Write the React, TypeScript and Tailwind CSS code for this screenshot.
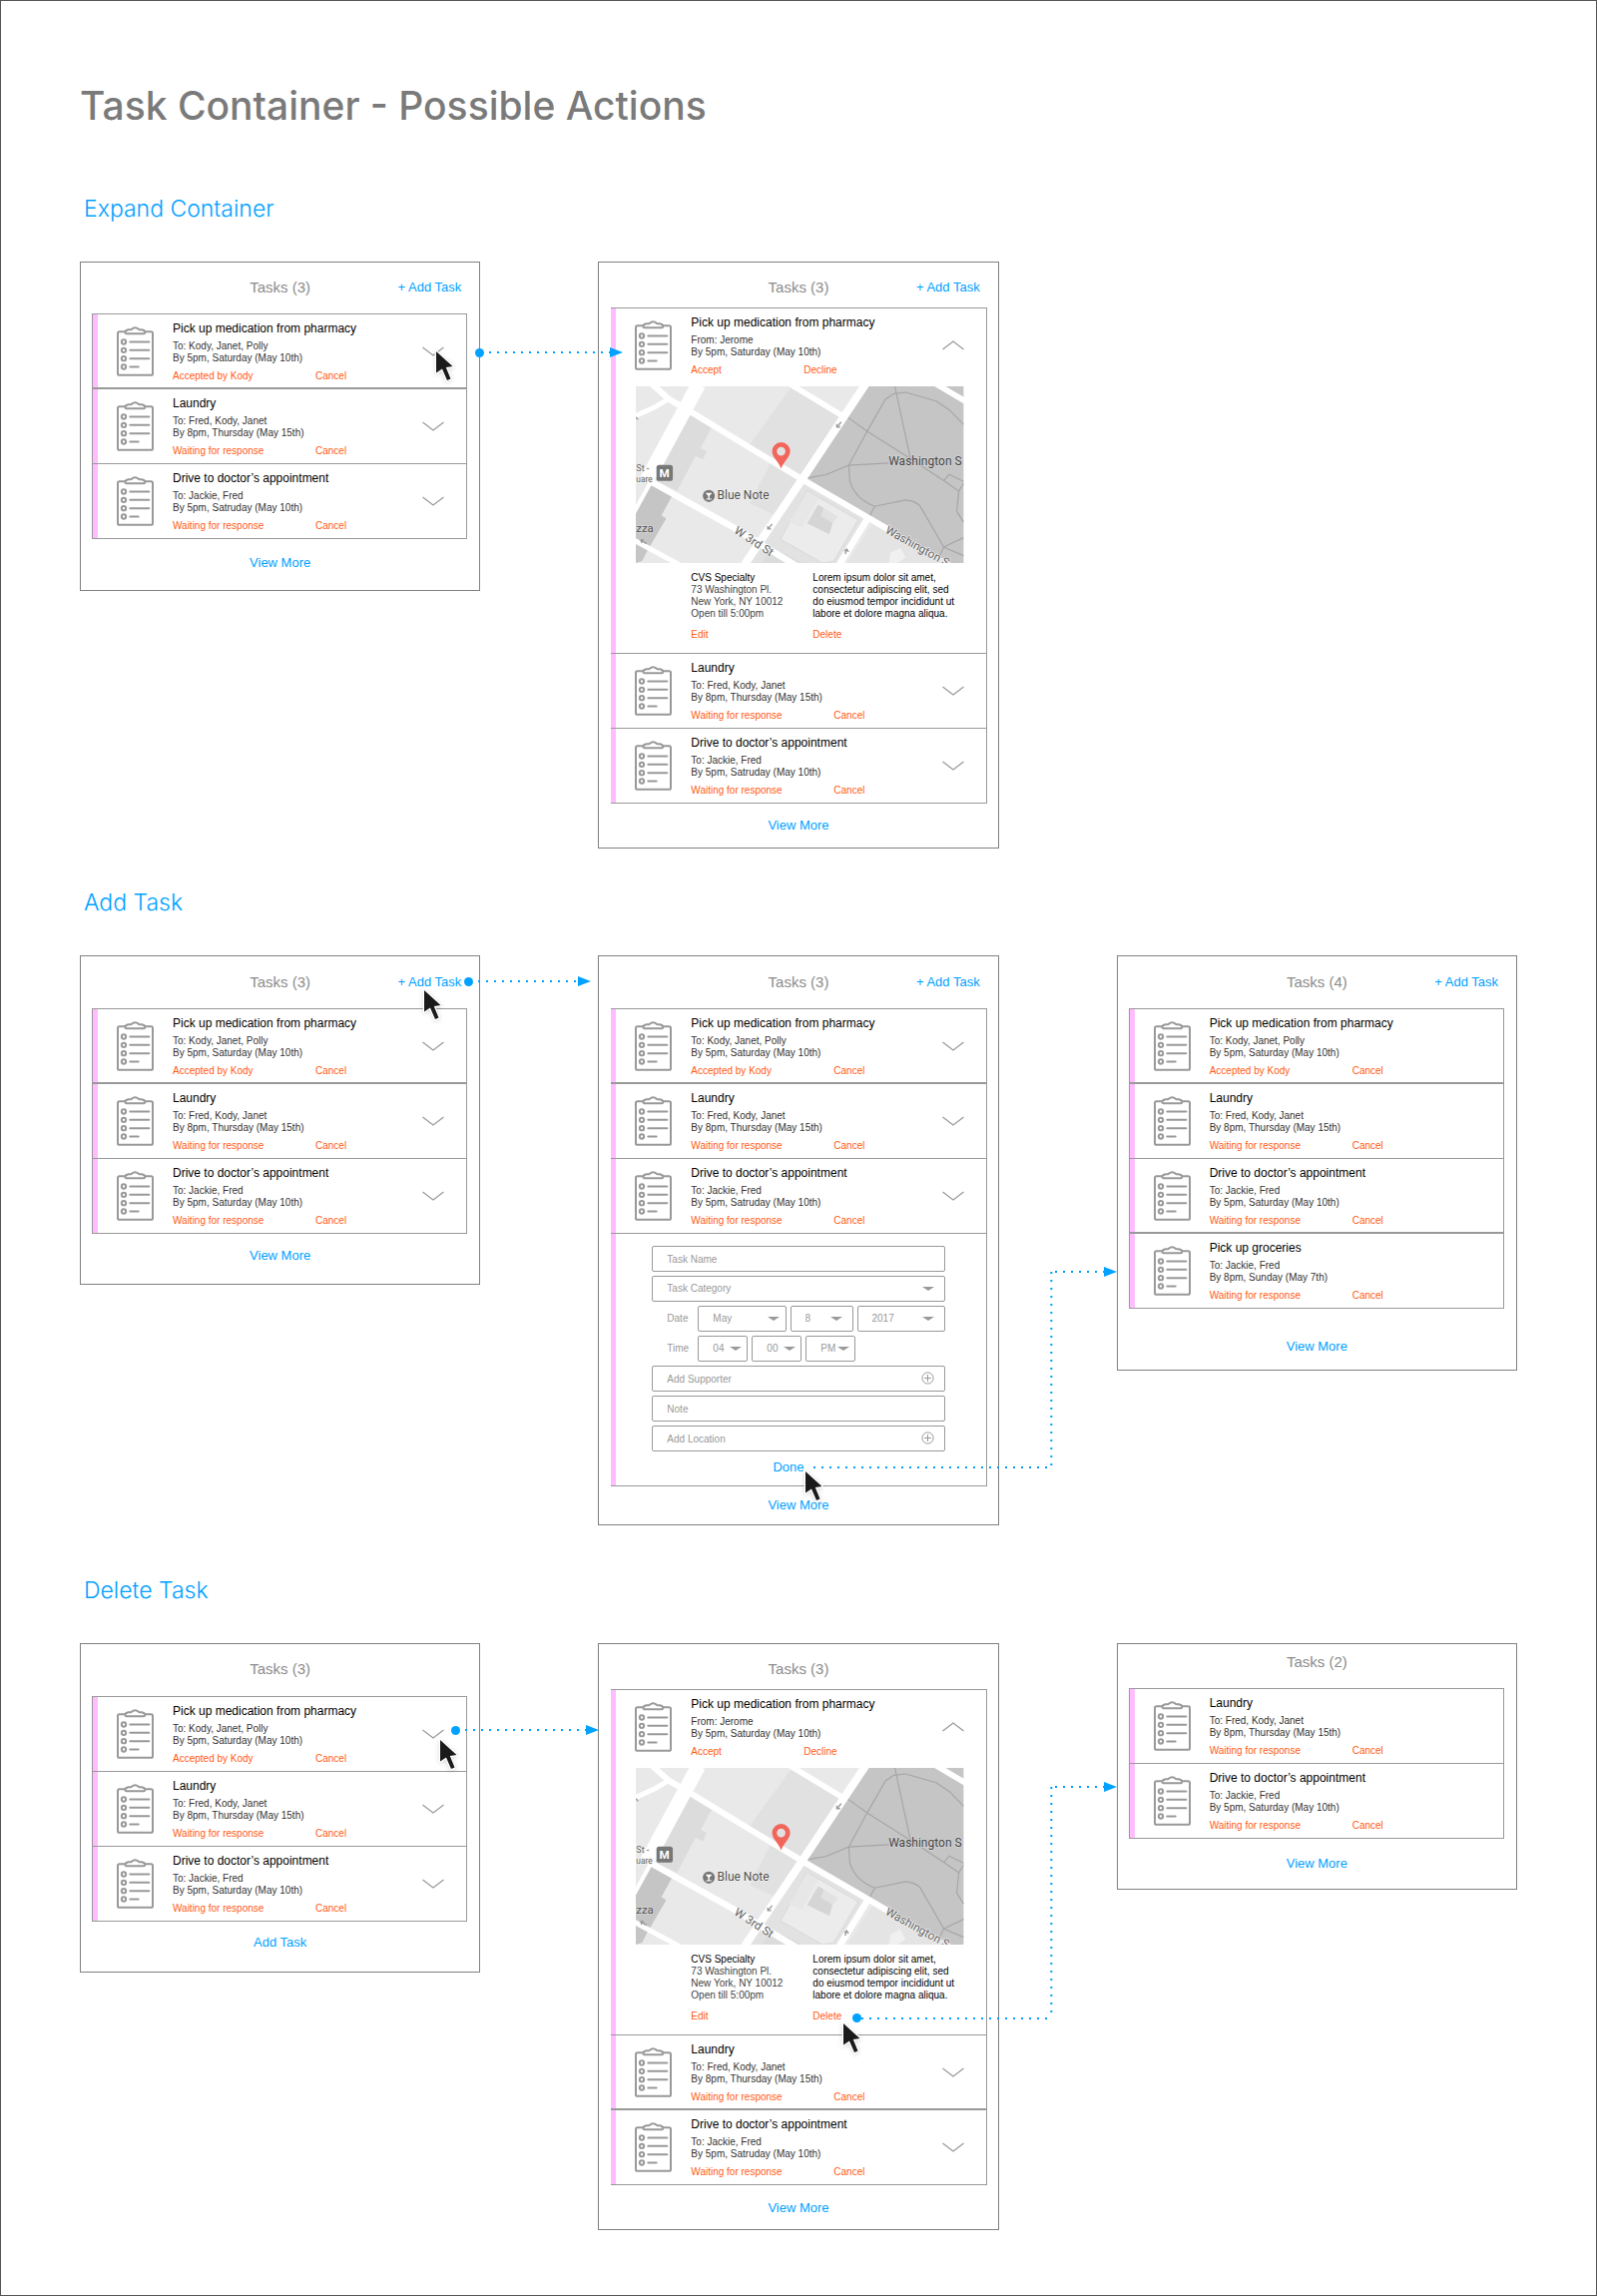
import React from "react";

type Task = {
  title: string;
  to: string;
  by: string;
  status: string;
  action: string;
};

const medication: Task = {
  title: "Pick up medication from pharmacy",
  to: "To: Kody, Janet, Polly",
  by: "By 5pm, Saturday (May 10th)",
  status: "Accepted by Kody",
  action: "Cancel",
};
const incoming: Task = {
  title: "Pick up medication from pharmacy",
  to: "From: Jerome",
  by: "By 5pm, Saturday (May 10th)",
  status: "Accept",
  action: "Decline",
};
const laundry: Task = {
  title: "Laundry",
  to: "To: Fred, Kody, Janet",
  by: "By 8pm, Thursday (May 15th)",
  status: "Waiting for response",
  action: "Cancel",
};
const doctor: Task = {
  title: "Drive to doctor’s appointment",
  to: "To: Jackie, Fred",
  by: "By 5pm, Saturday (May 10th)",
  status: "Waiting for response",
  action: "Cancel",
};
const doctorTypo: Task = { ...doctor, by: "By 5pm, Satruday (May 10th)" };
const groceries: Task = {
  title: "Pick up groceries",
  to: "To: Jackie, Fred",
  by: "By 8pm, Sunday (May 7th)",
  status: "Waiting for response",
  action: "Cancel",
};

function ClipboardIcon() {
  return (
    <svg
      viewBox="0 0 111 149"
      className="ml-[19px] mt-3 h-[50px] w-[37px] shrink-0"
      fill="none"
      stroke="#999999"
      strokeWidth="6"
      strokeLinecap="round"
      strokeLinejoin="round"
      aria-hidden="true"
    >
      <path d="M25 15H8q-5 0-5 5v121q0 5 5 5h95q5 0 5-5V20q0-5-5-5H86" />
      <path d="M28 21h54c3 0 3-3 3-5c-1-4-5-6-10-7h-8c-3-1-4-6-12-6s-9 5-12 6h-8c-5 1-9 3-10 7c0 2 0 5 3 5z" />
      {[46, 71, 96, 121].map((y) => (
        <g key={y}>
          <circle cx="21" cy={y} r="6.5" />
          <path d={y === 121 ? "M40 121h25" : `M40 ${y}h57`} />
        </g>
      ))}
    </svg>
  );
}

function Chevron({ up = false }: { up?: boolean }) {
  return (
    <button
      type="button"
      aria-label={up ? "Collapse task" : "Expand task"}
      className="mr-[22px] mt-8 h-[10px] w-[22px] shrink-0 self-start"
    >
      <svg viewBox="0 0 22 10" className="block h-full w-full" fill="none" stroke="#999999" strokeWidth="1.2">
        <path d={up ? "M0.5 9L11 1l10.5 8" : "M0.5 1L11 9l10.5-8"} />
      </svg>
    </button>
  );
}

function LocationMap() {
  return (
    <svg
      viewBox="141 411 983 530"
      preserveAspectRatio="xMidYMid slice"
      className="ml-5 mt-[10px] mr-[22px] block h-[177px]"
      role="img"
      aria-label="Map of the pharmacy location"
    >
      <rect x="141" y="411" width="983" height="530" fill="#e9e9e9" />
      <path d="M305 490L368 536L335 597L354 606L343 630L320 620L265 725L190 690Z" fill="#dcdcdc" />
      <path d="M607 413L770 505L640 690L480 590Z" fill="#e1e1e1" />
      <path d="M545 640L640 690L565 800L483 762Z" fill="#e1e1e1" />
      <path d="M835 411H1124V960L880 830L645 690Z" fill="#c5c5c5" />
      <path d="M185 703L250 740L218 798L232 808L175 905L160 935L141 941V790Z" fill="#c5c5c5" />
      <path d="M640 700L835 812L755 941H480Z" fill="#e2e2e2" />
      <path d="M655 724L808 812L735 935L700 941L575 870Z" fill="#ececec" stroke="#dadada" strokeWidth="3" />
      <path d="M655 726L690 746L640 835L600 820Z" fill="#e7e7e7" />
      <path d="M688 766L706 776L698 798L732 818L722 855L655 822Z" fill="#d5d5d5" />
      <path d="M706 776L747 801L732 822L696 800Z" fill="#e2e2e2" />
      <path d="M545 900L590 915L640 941H520Z" fill="#dcdcdc" />
      <path d="M850 825L1080 950H770Z" fill="#e4e4e4" />
      <path d="M905 910L935 895L950 925L925 941H900Z" fill="#f0f0f0" />
      <g fill="none" stroke="#a6a6a6" strokeWidth="3.5">
        <path d="M778 505L835 546L965 628L1065 694L1110 725L1124 703" />
        <path d="M1124 525L1082 482L1042 455L950 429L915 433L890 450L835 546L780 648L712 676L655 686" />
        <path d="M918 411L965 628M780 648L900 641" />
        <path d="M780 648L783 695Q798 748 858 771L950 752Q980 755 994 770L1065 893L1124 919" />
        <path d="M858 771L838 808M1110 725L1104 786L1124 818" />
        <path d="M1065 694L1081 675L1124 696M1065 893L1124 865M1065 893L1045 935" />
      </g>
      <g fill="none" stroke="#ffffff">
        <path d="M329 405L175 690" strokeWidth="44" />
        <path d="M196 680L130 800" strokeWidth="12" />
        <path d="M185 400L240 449L310 490L640 690L900 841" strokeWidth="18" />
        <path d="M135 502L195 475L240 449" strokeWidth="15" />
        <path d="M600 402L765 502" strokeWidth="17" />
        <path d="M830 405L640 690L468 945" strokeWidth="24" />
        <path d="M180 693L440 838L640 960" strokeWidth="19" />
        <path d="M135 872L275 948" strokeWidth="15" />
        <path d="M835 810L752 945" strokeWidth="20" />
        <path d="M1035 400L1130 456" strokeWidth="17" />
      </g>
      <g fill="none" stroke="#999999" strokeWidth="4">
        <path d="M757 518L745 533M744 524v9h10" />
        <path d="M550 824L538 839M537 830v9h10" />
        <path d="M769 914L774 899M767 905l7-6 5 9" />
        <path d="M173 883L156 872M165 871l-9 1 3 9" />
        <path d="M141 503l7 8" />
      </g>
      <g
        fontFamily="Roboto, 'Liberation Sans', sans-serif"
        fontWeight="400"
        fill="#666666"
        stroke="#f2f2f2"
        strokeWidth="4"
        strokeLinejoin="round"
        paintOrder="stroke"
      >
        <text x="899" y="649" fontSize="36" fill="#444444" stroke="#d6d6d6">Washington S</text>
        <text x="385" y="750" fontSize="36" fill="#505050">Blue Note</text>
        <text x="142" y="665" fontSize="27">St -</text>
        <text x="142" y="699" fontSize="25">uare</text>
        <text x="142" y="847" fontSize="34" fill="#505050" stroke="#d6d6d6">zza</text>
        <text transform="translate(434 850) rotate(33)" fontSize="35">W 3rd St</text>
        <text transform="translate(887 849) rotate(29)" fontSize="35">Washington S</text>
      </g>
      <rect x="203" y="647" width="49" height="48" rx="8" fill="#777777" />
      <text x="227" y="684" fontSize="35" fontWeight="700" fill="#ffffff" textAnchor="middle" fontFamily="Roboto, sans-serif">
        M
      </text>
      <circle cx="360" cy="740" r="18" fill="#777777" />
      <path d="M350 731h20l-8 9v8h6v3h-16v-3h6v-8z" fill="#ffffff" />
      <path
        d="M577 658C569 636 550 624 550 606a27 27 0 0 1 54 0C604 624 585 636 577 658zM577 593a13 13 0 1 0 0 26a13 13 0 0 0 0-26z"
        fill="#f2655b"
        fillRule="evenodd"
      />
    </svg>
  );
}

const linkClass = "block text-left text-[10px] leading-3 text-[#ff5a14]";

function TaskRow({
  task,
  chevron = "down",
  thick = false,
  children,
}: {
  task: Task;
  chevron?: "down" | "up" | "none";
  thick?: boolean;
  children?: React.ReactNode;
}) {
  const narrow = task.action === "Decline";
  return (
    <li className={thick ? "flex border-b-2 border-[#999999]" : "flex border-b border-[#999999]"}>
      <span className="w-[5px] shrink-0 bg-[#ffbdff]" />
      <div className="min-w-0 flex-1">
        <div className="flex">
          <ClipboardIcon />
          <div className="ml-[19px] min-w-0 flex-1 pt-[6px]">
            <h3 className="whitespace-nowrap text-xs leading-4 text-black">{task.title}</h3>
            <p className="mt-1 whitespace-nowrap text-[10px] leading-3 text-[#333333]">
              {task.to}
              <br />
              {task.by}
            </p>
            <div className="mt-[6px] flex whitespace-nowrap">
              <div className={narrow ? "w-[113px]" : "w-[143px]"}>
                <button type="button" className={linkClass}>{task.status}</button>
              </div>
              <button type="button" className={linkClass}>{task.action}</button>
            </div>
          </div>
          {chevron !== "none" && <Chevron up={chevron === "up"} />}
        </div>
        {children ?? <div className={thick ? "h-[5px]" : "h-[6px]"} />}
      </div>
    </li>
  );
}

function ExpandedDetails() {
  return (
    <>
      <LocationMap />
      <div className="ml-[75px] mt-[9px] flex pb-3 text-[10px] leading-3 whitespace-nowrap">
        <div className="w-[122px]">
          <p className="text-[#444444]">
            <span className="text-black">CVS Specialty</span>
            <br />
            73 Washington Pl.
            <br />
            New York, NY 10012
            <br />
            Open till 5:00pm
          </p>
          <button type="button" className={"mt-[9px] " + linkClass}>Edit</button>
        </div>
        <div>
          <p className="text-black">
            Lorem ipsum dolor sit amet,
            <br />
            consectetur adipiscing elit, sed
            <br />
            do eiusmod tempor incididunt ut
            <br />
            labore et dolore magna aliqua.
          </p>
          <button type="button" className={"mt-[9px] " + linkClass}>Delete</button>
        </div>
      </div>
    </>
  );
}

const fieldClass =
  "block h-[26px] w-full appearance-none rounded-[2px] border border-[#999999] bg-white pl-[14px] text-[10px] leading-3 text-[#999999] placeholder:text-[#999999]";

function SelectField({ label, value, arrow, id }: { label: string; value: string; arrow: string; id?: string }) {
  return (
    <div className="relative w-full">
      <select id={id} aria-label={label} defaultValue={value} className={fieldClass}>
        <option>{value}</option>
      </select>
      <svg
        viewBox="0 0 12 4"
        className={"pointer-events-none absolute top-[11px] h-1 w-3 " + arrow}
        fill="#999999"
        aria-hidden="true"
      >
        <path d="M0 0h12L6 4z" />
      </svg>
    </div>
  );
}

function AddField({ label }: { label: string }) {
  return (
    <div className="relative">
      <input aria-label={label} placeholder={label} className={fieldClass} />
      <button type="button" aria-label={label} className="absolute right-[11px] top-[6px] h-[13px] w-[13px]">
        <svg viewBox="0 0 13 13" className="block h-full w-full" fill="none" stroke="#999999" strokeWidth="1">
          <circle cx="6.5" cy="6.5" r="5.6" />
          <path d="M6.5 3v7M3 6.5h7" />
        </svg>
      </button>
    </div>
  );
}

function AddTaskForm() {
  return (
    <li className="flex border-b border-[#999999]">
      <span className="w-[5px] shrink-0 bg-[#ffbdff]" />
      <form className="flex flex-1 flex-col gap-1 pb-[10px] pl-9 pr-[41px] pt-3">
        <input aria-label="Task Name" placeholder="Task Name" className={fieldClass} />
        <SelectField label="Task Category" value="Task Category" arrow="right-[11px]" />
        <div className="flex items-center">
          <label htmlFor="month" className="w-[46px] shrink-0 pl-[15px] text-[10px] leading-3 text-[#999999]">
            Date
          </label>
          <div className="flex flex-1 gap-1">
            <div className="flex-1">
              <SelectField id="month" label="Month" value="May" arrow="right-[7px]" />
            </div>
            <div className="w-[63px]">
              <SelectField label="Day" value="8" arrow="right-[11px]" />
            </div>
            <div className="flex-1">
              <SelectField label="Year" value="2017" arrow="right-[11px]" />
            </div>
          </div>
        </div>
        <div className="flex items-center">
          <label htmlFor="hour" className="w-[46px] shrink-0 pl-[15px] text-[10px] leading-3 text-[#999999]">
            Time
          </label>
          <div className="flex gap-1">
            <div className="w-[50px]">
              <SelectField id="hour" label="Hour" value="04" arrow="right-[6px]" />
            </div>
            <div className="w-[50px]">
              <SelectField label="Minute" value="00" arrow="right-[6px]" />
            </div>
            <div className="w-[50px]">
              <SelectField label="AM or PM" value="PM" arrow="right-[6px]" />
            </div>
          </div>
        </div>
        <AddField label="Add Supporter" />
        <input aria-label="Note" placeholder="Note" className={fieldClass} />
        <AddField label="Add Location" />
        <button type="button" className="mr-5 mt-1 self-center text-[13px] leading-4 text-[#00a1ff]">
          Done
        </button>
      </form>
    </li>
  );
}

function TaskCard({
  count,
  addLink = true,
  header,
  list,
  footer,
  footerLabel = "View More",
  children,
}: {
  count: number;
  addLink?: boolean;
  header: string;
  list: string;
  footer: string;
  footerLabel?: string;
  children: React.ReactNode;
}) {
  return (
    <article className="border border-[#808080] bg-white">
      <header className={"grid grid-cols-[1fr_auto_1fr] items-center " + header}>
        <span />
        <h2 className="text-[15px] leading-5 text-[#8c8c8c]">Tasks ({count})</h2>
        {addLink && (
          <button type="button" className="mr-[18px] justify-self-end text-[13px] leading-5 text-[#00a1ff]">
            + Add Task
          </button>
        )}
      </header>
      <ul className={"border-r border-t border-[#999999] " + list}>{children}</ul>
      <div className={"text-center " + footer}>
        <button type="button" className="text-[13px] leading-4 text-[#00a1ff] block mx-auto">
          {footerLabel}
        </button>
      </div>
    </article>
  );
}

const sideList = "ml-[11px] mr-3 border-l";
const midList = "ml-3 mr-[11px]";

function Dot() {
  return <span className="h-[9px] w-[9px] shrink-0 rounded-full bg-[#00a1ff]" />;
}

function ArrowHead() {
  return (
    <svg viewBox="0 0 13 10" className="h-[10px] w-[13px] shrink-0" fill="#00a1ff">
      <path d="M0 0l13 5-13 5z" />
    </svg>
  );
}

const dots = { stroke: "#00a1ff", strokeWidth: 2, strokeDasharray: "2 6" };

function Connector({ place }: { place: string }) {
  return (
    <div className={"pointer-events-none absolute z-10 flex h-[10px] items-center " + place} aria-hidden="true">
      <Dot />
      <svg className="ml-1 h-[2px] min-w-0 flex-1">
        <line x1="1" y1="1" x2="100%" y2="1" {...dots} />
      </svg>
      <ArrowHead />
    </div>
  );
}

function ElbowConnector({ place, dot = false }: { place: string; dot?: boolean }) {
  return (
    <div className={"pointer-events-none absolute z-10 flex items-stretch " + place} aria-hidden="true">
      <div className="-mb-1 flex w-[9px] items-end">{dot && <Dot />}</div>
      <svg className="h-full min-w-0 flex-1 overflow-visible">
        <line x1="0" y1="100%" x2="100%" y2="100%" {...dots} />
        <line x1="100%" y1="0" x2="100%" y2="100%" {...dots} />
      </svg>
      <div className="-mt-[5px] flex h-[10px] w-[65px] items-center">
        <svg className="h-[2px] min-w-0 flex-1">
          <line x1="3" y1="1" x2="100%" y2="1" {...dots} />
        </svg>
        <ArrowHead />
      </div>
    </div>
  );
}

function Cursor({ place }: { place: string }) {
  return (
    <svg
      viewBox="-3 -3 24 36"
      className={"pointer-events-none absolute z-20 h-9 w-6 drop-shadow-sm " + place}
      aria-hidden="true"
    >
      <path
        d="M0 0V21.5L6 17.5L11 29L14.5 27.5L9.8 16L16.5 15Z"
        fill="#1a1a1a"
        stroke="#ffffff"
        strokeWidth="2.5"
        strokeLinejoin="round"
        paintOrder="stroke"
      />
    </svg>
  );
}

function Section({ title, place, children }: { title: string; place: string; children: React.ReactNode }) {
  return (
    <section className={place}>
      <h2 className="pl-1 font-[Inter,'Liberation_Sans',sans-serif] text-[23px] font-light leading-8 text-[#00a1ff]">
        {title}
      </h2>
      <div className="mt-[37px] grid grid-cols-3 items-start gap-x-[118px]">{children}</div>
    </section>
  );
}

export default function App() {
  return (
    <main className="border border-[#555555] bg-white px-[79px] pb-[65px] pt-[81px] font-['Liberation_Sans',Arial,sans-serif]">
      <h1 className="font-[Inter,'Liberation_Sans',sans-serif] text-[39px] font-medium leading-[48px] text-[#7a7a7a]">
        Task Container - Possible Actions
      </h1>

      <Section title="Expand Container" place="mt-[63px]">
        <div className="relative">
          <TaskCard count={3} header="pt-[15px] pb-4" list={sideList} footer="pt-4 pb-[19px]">
            <TaskRow task={medication} thick />
            <TaskRow task={laundry} />
            <TaskRow task={doctorTypo} />
          </TaskCard>
          <Connector place="left-[396px] -right-[143px] top-[86px]" />
          <Cursor place="left-[354px] top-[87px]" />
        </div>
        <TaskCard count={3} header="pt-[15px] pb-[10px]" list={midList} footer="py-[14px]">
          <TaskRow task={incoming} chevron="up">
            <ExpandedDetails />
          </TaskRow>
          <TaskRow task={laundry} />
          <TaskRow task={doctorTypo} />
        </TaskCard>
      </Section>

      <Section title="Add Task" place="mt-[38px]">
        <div className="relative">
          <TaskCard count={3} header="pt-4 pb-4" list={sideList} footer="pt-[14px] pb-5">
            <TaskRow task={medication} thick />
            <TaskRow task={laundry} />
            <TaskRow task={doctor} />
          </TaskCard>
          <Connector place="left-[385px] -right-[111px] top-[21px]" />
          <Cursor place="left-[342px] top-8" />
        </div>
        <div className="relative">
          <TaskCard count={3} header="pt-4 pb-4" list={midList} footer="py-[11px]">
            <TaskRow task={medication} thick />
            <TaskRow task={laundry} />
            <TaskRow task={doctorTypo} />
            <AddTaskForm />
          </TaskCard>
          <ElbowConnector place="left-[207px] -right-[118px] top-[317px] h-[196px]" />
          <Cursor place="left-[205px] top-[514px]" />
        </div>
        <TaskCard count={4} header="pt-4 pb-4" list={sideList} footer="pt-[30px] pb-[15px]">
          <TaskRow task={medication} thick chevron="none" />
          <TaskRow task={laundry} chevron="none" />
          <TaskRow task={doctor} thick chevron="none" />
          <TaskRow task={groceries} chevron="none" />
        </TaskCard>
      </Section>

      <Section title="Delete Task" place="mt-[49px]">
        <div className="relative">
          <TaskCard
            count={3}
            addLink={false}
            header="pt-[15px] pb-[17px]"
            list={sideList}
            footer="pt-[13px] pb-[21px]"
            footerLabel="Add Task"
          >
            <TaskRow task={medication} />
            <TaskRow task={laundry} />
            <TaskRow task={doctor} />
          </TaskCard>
          <Connector place="left-[372px] -right-[119px] top-[82px]" />
          <Cursor place="left-[358px] top-[94px]" />
        </div>
        <div className="relative">
          <TaskCard count={3} addLink={false} header="pt-[15px] pb-[10px]" list={midList} footer="pt-[15px] pb-[13px]">
            <TaskRow task={incoming} chevron="up">
              <ExpandedDetails />
            </TaskRow>
            <TaskRow task={laundry} thick />
            <TaskRow task={doctorTypo} />
          </TaskCard>
          <ElbowConnector dot place="left-[255px] -right-[118px] top-[144px] h-[232px]" />
          <Cursor place="left-[243px] top-[378px]" />
        </div>
        <TaskCard count={2} addLink={false} header="pt-2 pb-4" list={sideList} footer="py-[17px]">
          <TaskRow task={laundry} chevron="none" />
          <TaskRow task={doctor} chevron="none" />
        </TaskCard>
      </Section>
    </main>
  );
}
